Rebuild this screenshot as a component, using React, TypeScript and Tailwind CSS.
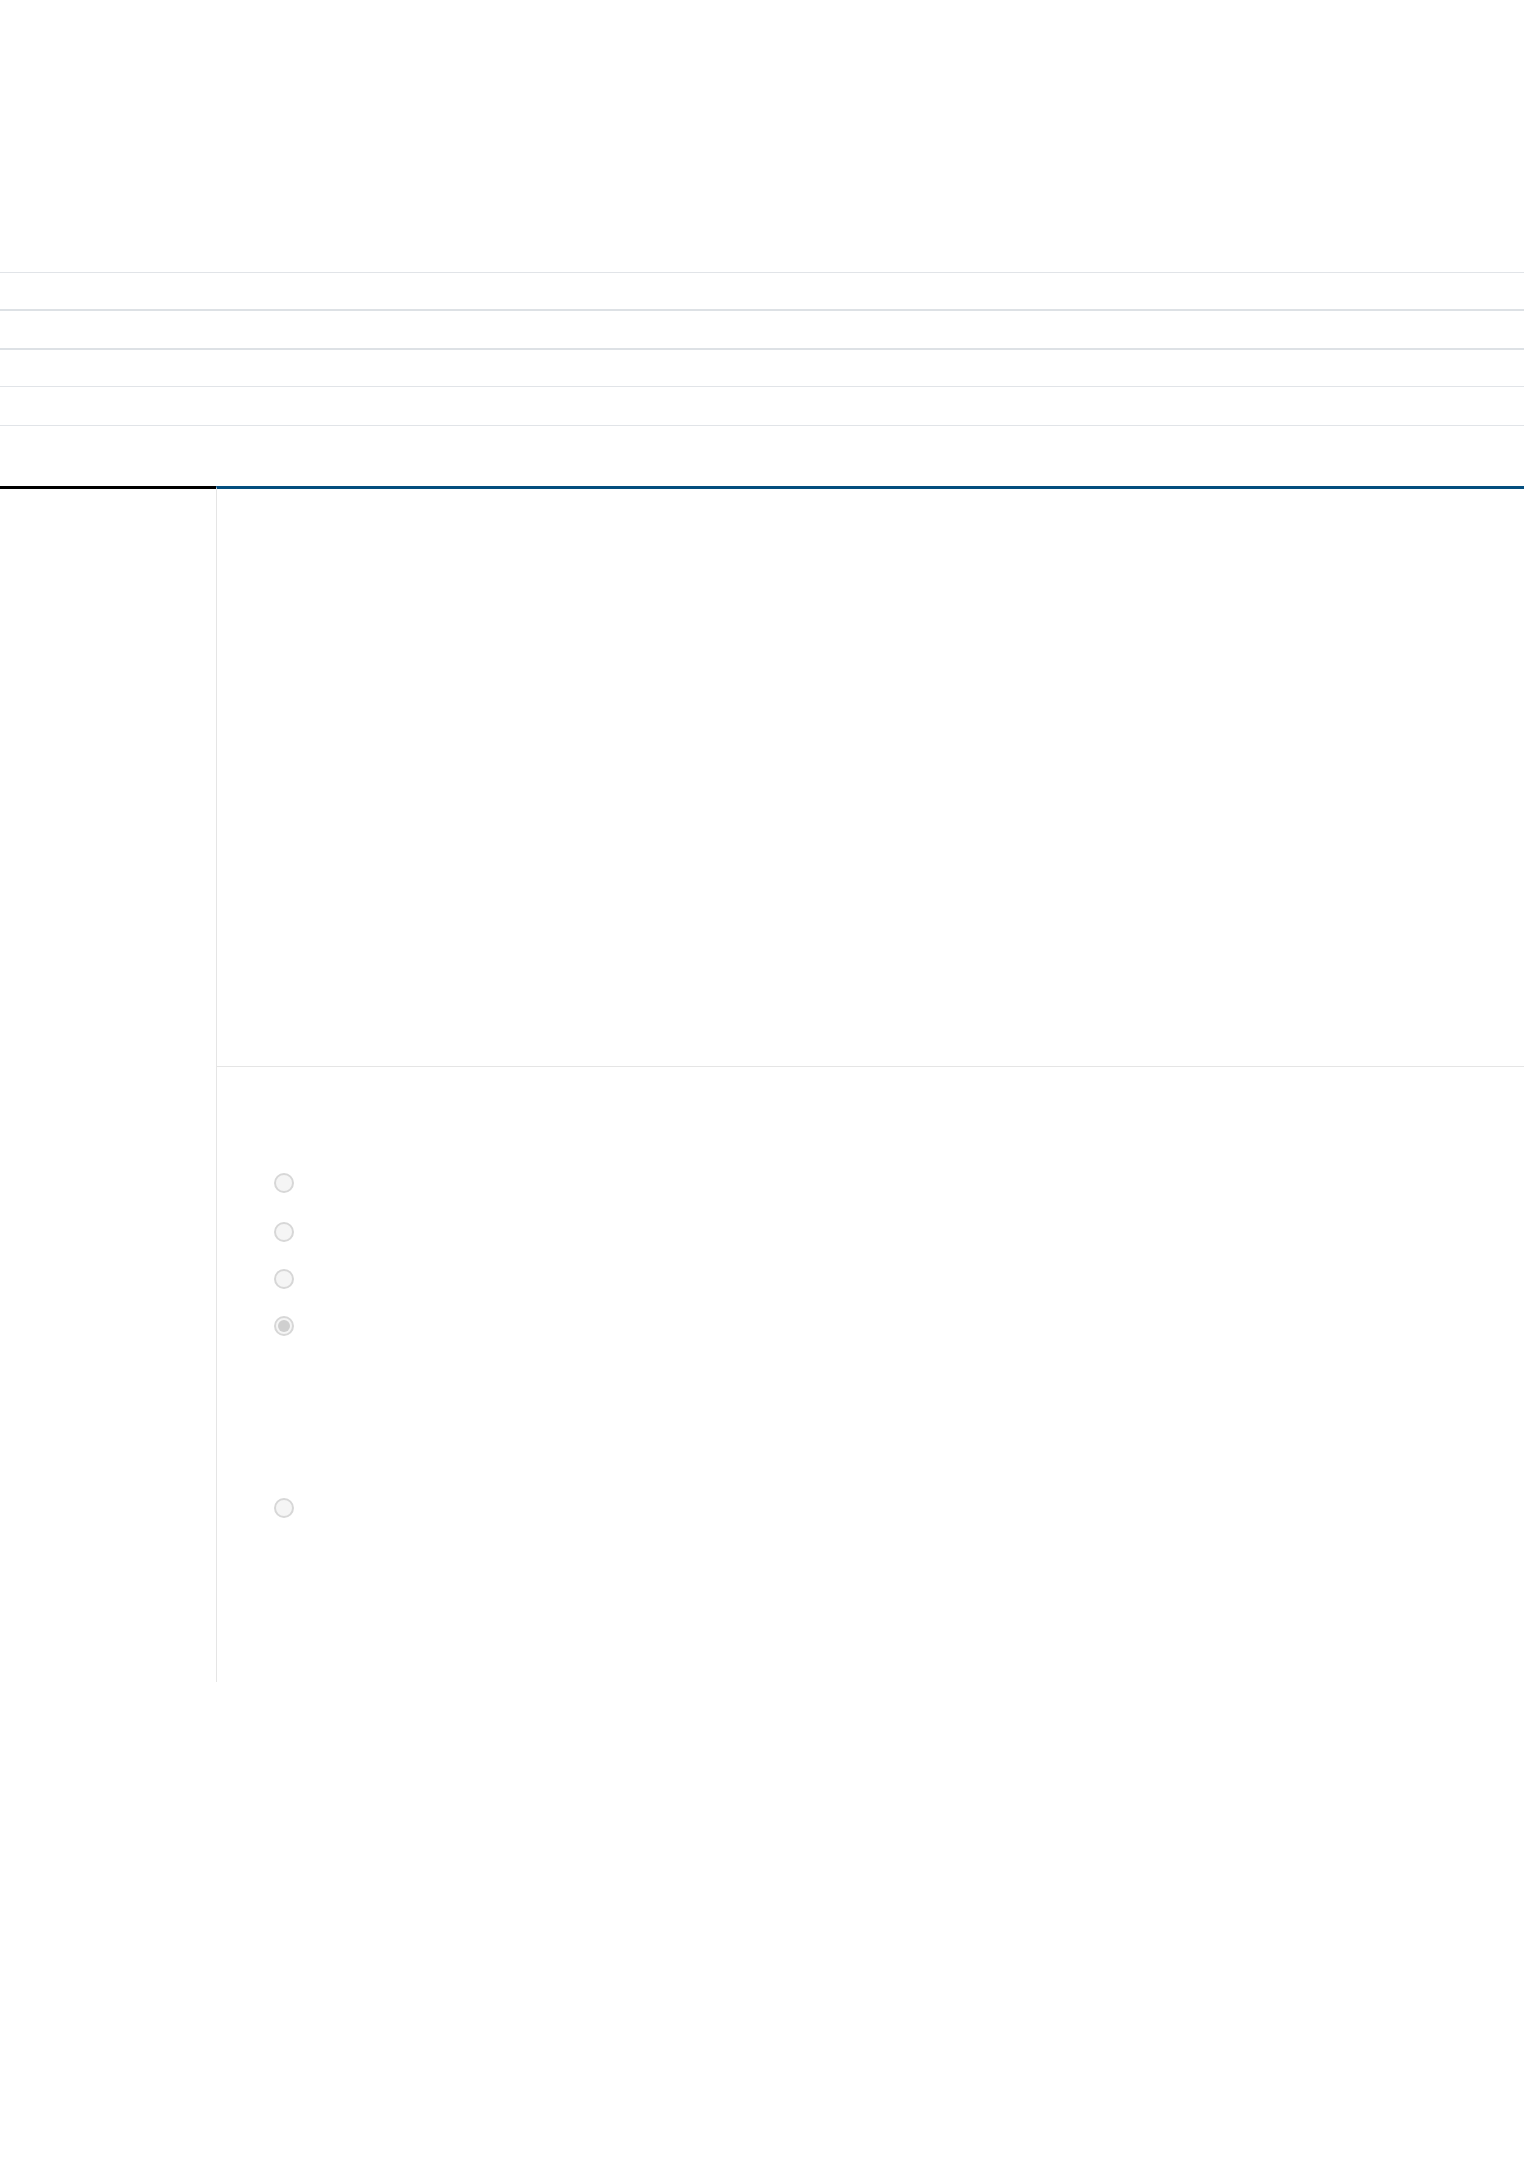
import React from "react";

const options = [
  { id: "a", checked: false, gap: "mt-0" },
  { id: "b", checked: false, gap: "mt-[29px]" },
  { id: "c", checked: false, gap: "mt-[27px]" },
  { id: "d", checked: true, gap: "mt-[27px]" },
  { id: "e", checked: false, gap: "mt-[162px]" },
];

function Radio({ checked }: { checked: boolean }) {
  return (
    <span className="flex h-5 w-5 items-center justify-center rounded-full border-2 border-[#d7d7d7] bg-[#f5f5f5]">
      {checked && <span className="h-3 w-3 rounded-full bg-[#cfcfcf]" />}
    </span>
  );
}

export default function App() {
  return (
    <div className="min-h-[2181px] w-full bg-white font-['Liberation_Sans',Arial,sans-serif]">
      {/* header space */}
      <div className="h-[272px]" />

      {/* list rows */}
      <div>
        <div className="h-[37px] border-t border-[#e1e4e8]" />
        <div className="h-[39px] border-t-2 border-[#dde1e5]" />
        <div className="h-[38px] border-t-2 border-[#dde1e5]" />
        <div className="h-[39px] border-t border-[#e1e4e8]" />
        <div className="h-[61px] border-t border-[#e1e4e8]" />
      </div>

      {/* two columns */}
      <div className="flex">
        <aside className="w-[216px] shrink-0 border-t-[3px] border-black" />
        <main className="flex-1 border-l border-t-[3px] border-l-[#e5e5e5] border-t-[#034e7e]">
          <section className="h-[577px]" />
          <section className="h-[616px] border-t border-[#e5e5e5] pl-[57px] pt-[106px]">
            <div className="flex flex-col">
              {options.map((o) => (
                <div key={o.id} className={o.gap}>
                  <Radio checked={o.checked} />
                </div>
              ))}
            </div>
          </section>
        </main>
      </div>
    </div>
  );
}
